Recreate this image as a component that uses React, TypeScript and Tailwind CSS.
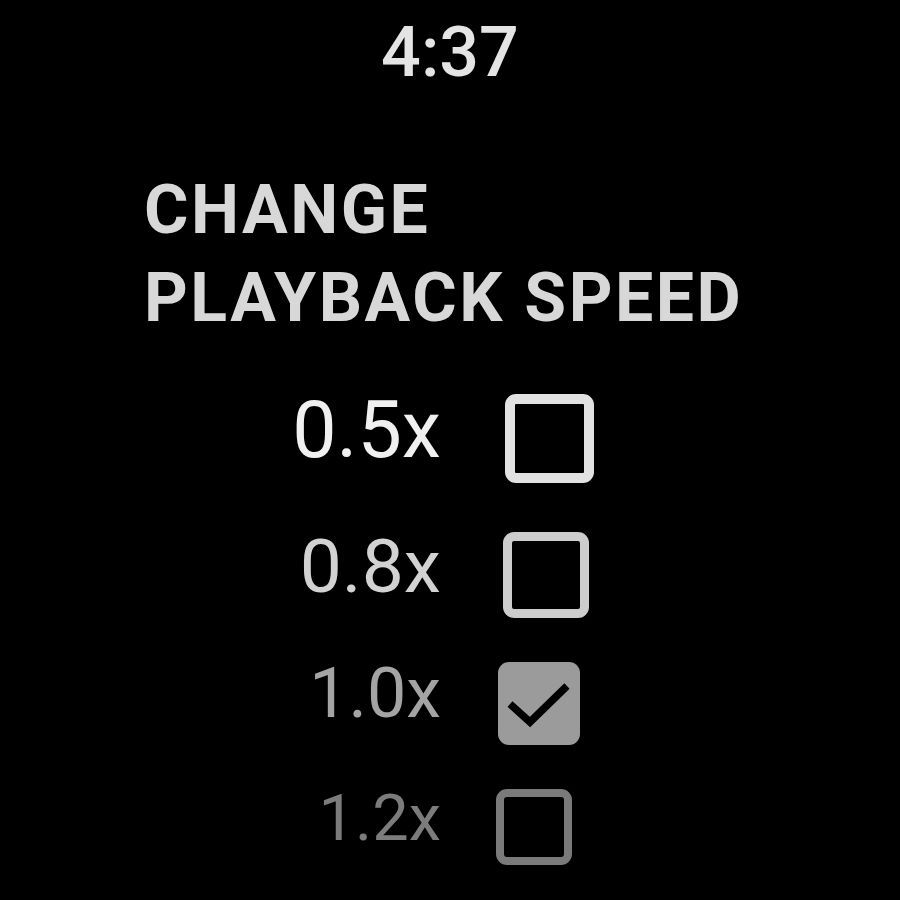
import React from "react";

type Row = {
  label: string;
  rowCls: string;
  textCls: string;
  boxWrapCls: string;
  boxCls: string;
  checked?: boolean;
};

const rows: Row[] = [
  {
    label: "0.5x",
    rowCls: "mt-[52px] h-[89px]",
    textCls: "text-[79px] pb-[17px] text-[#f0f0f0]",
    boxWrapCls: "ml-[64px]",
    boxCls: "w-[89px] h-[89px] border-[10px] border-[#e2e2e2]",
  },
  {
    label: "0.8x",
    rowCls: "mt-[49px] h-[86px]",
    textCls: "text-[75px] pb-[17px] text-[#d2d2d2]",
    boxWrapCls: "ml-[62px]",
    boxCls: "w-[86px] h-[86px] border-[9px] border-[#cdcdcd]",
  },
  {
    label: "1.0x",
    rowCls: "mt-[44px] h-[83px]",
    textCls: "text-[70px] pb-[21px] text-[#a4a4a4]",
    boxWrapCls: "ml-[57px]",
    boxCls: "w-[82px] h-[83px] bg-[#9b9b9b]",
    checked: true,
  },
  {
    label: "1.2x",
    rowCls: "mt-[44px] h-[76px]",
    textCls: "text-[65px] pb-[18px] text-[#7c7c7c]",
    boxWrapCls: "ml-[55px]",
    boxCls: "w-[76px] h-[76px] border-[8px] border-[#7a7a7a]",
  },
];

function CheckMark() {
  return (
    <svg className="w-full h-full" viewBox="0 0 82 83">
      <path
        d="M12 42 L32 60 L69 24"
        fill="none"
        stroke="#000"
        strokeWidth="7.5"
        strokeLinecap="butt"
        strokeLinejoin="miter"
      />
    </svg>
  );
}

export default function App() {
  return (
    <div className="w-[900px] h-[900px] bg-black overflow-hidden flex flex-col font-['Roboto',sans-serif]">
      <div className="pt-[17px] text-center text-[70px] leading-none text-[#e4e4e4] font-medium">4:37</div>
      <div className="mt-[79px] pl-[144px] text-[68px] leading-[88px] tracking-[2.5px] font-bold text-[#d8d8d8]">
        <div>CHANGE</div>
        <div>PLAYBACK SPEED</div>
      </div>
      {rows.map((r) => (
        <div key={r.label} className={"flex items-center " + r.rowCls}>
          <div className={"w-[441px] text-right leading-none " + r.textCls}>{r.label}</div>
          <div className={r.boxWrapCls}>
            <div className={"box-border rounded-[11px] " + r.boxCls}>{r.checked ? <CheckMark /> : null}</div>
          </div>
        </div>
      ))}
    </div>
  );
}
